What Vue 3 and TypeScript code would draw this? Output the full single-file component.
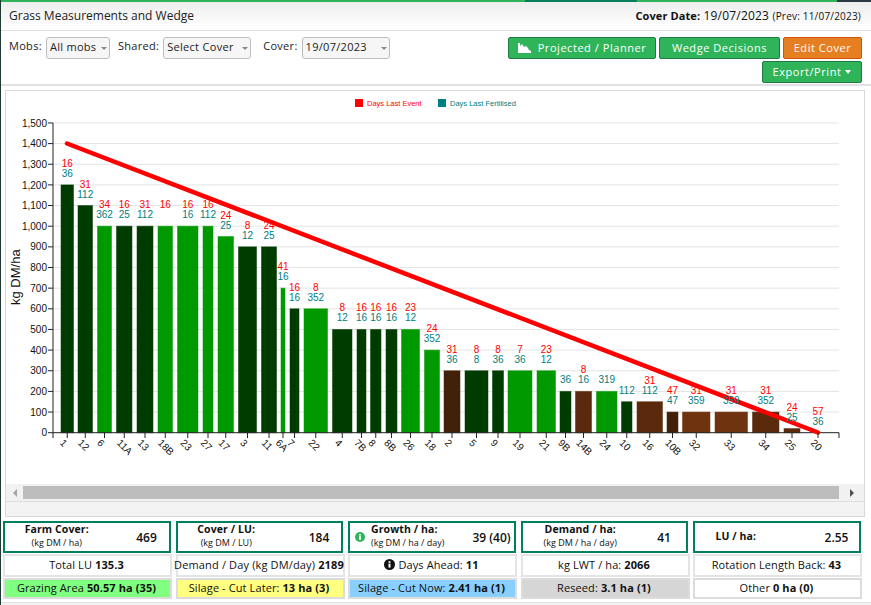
<script setup lang="ts">
interface Bar { n: string; x0: number; x1: number; v: number; c: string; r?: string; t?: string }
const DK = '#003b00', GR = '#009900', BD = '#42210b', BM = '#5b2a0c', BL = '#70330f'
const bars: Bar[] = [
  { n: '1', x0: 60.5, x1: 74, v: 1200, c: DK, r: '16', t: '36' },
  { n: '12', x0: 77.5, x1: 93, v: 1100, c: DK, r: '31', t: '112' },
  { n: '6', x0: 97, x1: 112, v: 1000, c: GR, r: '34', t: '362' },
  { n: '11A', x0: 116, x1: 132.5, v: 1000, c: DK, r: '16', t: '25' },
  { n: '13', x0: 136.5, x1: 153.5, v: 1000, c: DK, r: '31', t: '112' },
  { n: '18B', x0: 157.5, x1: 173, v: 1000, c: GR, r: '16' },
  { n: '23', x0: 177, x1: 198.5, v: 1000, c: GR, r: '16', t: '16' },
  { n: '27', x0: 202.5, x1: 213.5, v: 1000, c: GR, r: '16', t: '112' },
  { n: '17', x0: 217.5, x1: 234, v: 950, c: GR, r: '24', t: '25' },
  { n: '3', x0: 238, x1: 257, v: 900, c: DK, r: '8', t: '12' },
  { n: '11', x0: 261, x1: 277, v: 900, c: DK, r: '24', t: '25' },
  { n: '6A', x0: 280.5, x1: 285.5, v: 700, c: GR, r: '41', t: '16' },
  { n: '7', x0: 289.5, x1: 299.5, v: 600, c: DK, r: '16', t: '16' },
  { n: '22', x0: 303.5, x1: 328, v: 600, c: GR, r: '8', t: '352' },
  { n: '4', x0: 332, x1: 352.5, v: 500, c: DK, r: '8', t: '12' },
  { n: '7B', x0: 356.5, x1: 366.5, v: 500, c: DK, r: '16', t: '16' },
  { n: '8', x0: 370, x1: 381.5, v: 500, c: DK, r: '16', t: '16' },
  { n: '8B', x0: 385.5, x1: 397.5, v: 500, c: DK, r: '16', t: '16' },
  { n: '26', x0: 401, x1: 420, v: 500, c: GR, r: '23', t: '12' },
  { n: '18', x0: 424, x1: 440, v: 400, c: GR, r: '24', t: '352' },
  { n: '2', x0: 443.5, x1: 460.5, v: 300, c: BD, r: '31', t: '36' },
  { n: '5', x0: 464.5, x1: 488.5, v: 300, c: DK, r: '8', t: '8' },
  { n: '9', x0: 492, x1: 504, v: 300, c: DK, r: '8', t: '36' },
  { n: '19', x0: 507.5, x1: 532.5, v: 300, c: GR, r: '7', t: '36' },
  { n: '21', x0: 536.5, x1: 556, v: 300, c: GR, r: '23', t: '12' },
  { n: '9B', x0: 559.5, x1: 571.5, v: 200, c: DK, t: '36' },
  { n: '14B', x0: 575, x1: 592, v: 200, c: BM, r: '8', t: '16' },
  { n: '24', x0: 596, x1: 617.5, v: 200, c: GR, t: '319' },
  { n: '10', x0: 621, x1: 632.5, v: 150, c: DK, t: '112' },
  { n: '16', x0: 636.5, x1: 663, v: 150, c: BM, r: '31', t: '112' },
  { n: '10B', x0: 666.5, x1: 678.5, v: 100, c: BD, r: '47', t: '47' },
  { n: '32', x0: 682, x1: 710.5, v: 100, c: BL, r: '31', t: '359' },
  { n: '33', x0: 714.5, x1: 748, v: 100, c: BL, r: '31', t: '359' },
  { n: '34', x0: 752, x1: 779.5, v: 100, c: BM, r: '31', t: '352' },
  { n: '25', x0: 783.5, x1: 800.5, v: 20, c: BM, r: '24', t: '25' },
  { n: '20', x0: 818, x1: 818, v: 0, c: BM, r: '57', t: '36' },
]
const y0 = 432.7
const scale = 0.2065
const yOf = (v: number): number => y0 - v * scale
const cx = (b: Bar): number => (b.x0 + b.x1) / 2
const yTicks: number[] = Array.from({ length: 16 }, (_, i) => i * 100)
const fmt = (v: number): string => v.toLocaleString('en-US')

interface Stat { cls: string; title: string; sub?: string; value: string; info?: boolean }
const stats: Stat[] = [
  { cls: 'farm', title: 'Farm Cover:', sub: '(kg DM / ha)', value: '469' },
  { cls: 'lu', title: 'Cover / LU:', sub: '(kg DM / LU)', value: '184' },
  { cls: 'growth', title: 'Growth / ha:', sub: '(kg DM / ha / day)', value: '39 (40)', info: true },
  { cls: 'demand', title: 'Demand / ha:', sub: '(kg DM / ha / day)', value: '41' },
  { cls: 'luha', title: 'LU / ha:', value: '2.55' },
]
interface Cell { label: string; value: string; cls?: string; icon?: boolean }
const mids: Cell[] = [
  { label: 'Total LU', value: '135.3' },
  { label: 'Demand / Day (kg DM/day)', value: '2189', cls: 'tight' },
  { label: 'Days Ahead:', value: '11', icon: true },
  { label: 'kg LWT / ha:', value: '2066' },
  { label: 'Rotation Length Back:', value: '43' },
]
const areas: Cell[] = [
  { label: 'Grazing Area', value: '50.57 ha (35)', cls: 'green' },
  { label: 'Silage - Cut Later:', value: '13 ha (3)', cls: 'yellow' },
  { label: 'Silage - Cut Now:', value: '2.41 ha (1)', cls: 'blue' },
  { label: 'Reseed:', value: '3.1 ha (1)', cls: 'grey' },
  { label: 'Other', value: '0 ha (0)' },
]
</script>

<template>
  <div class="page">
    <div class="topline">
      <span class="seg s1"></span><span class="seg s2"></span><span class="seg s3"></span><span class="seg s4"></span>
    </div>
    <header class="head">
      <h1 class="title">Grass Measurements and Wedge</h1>
      <div class="cover-date"><b>Cover Date:</b> 19/07/2023 <small>(Prev: 11/07/2023)</small></div>
    </header>
    <section class="tools">
      <div class="filters">
        <label class="f-label">Mobs:</label>
        <div class="select s-mobs">All mobs<i class="caret"></i></div>
        <label class="f-label">Shared:</label>
        <div class="select s-shared">Select Cover<i class="caret"></i></div>
        <label class="f-label l-cover">Cover:</label>
        <div class="select s-cover">19/07/2023<i class="caret"></i></div>
      </div>
      <div class="actions">
        <button class="btn b-proj">
          <svg class="area" viewBox="0 0 13 10"><path d="M0 0 L2 0 L2 3 L4 1 L6 4 L8 3 L10 5 L11 7 L13 8 L13 10 L0 10 Z" fill="#fff"/></svg>
          Projected / Planner
        </button>
        <button class="btn b-wedge">Wedge Decisions</button>
        <button class="btn orange b-edit">Edit Cover</button>
        <button class="btn b-export">Export/Print <i class="down"></i></button>
      </div>
    </section>

    <section class="panel">
      <svg class="chart" viewBox="6 91 858 393" width="858" height="393">
        <rect x="355" y="99" width="8" height="8" fill="#f00"/>
        <text x="367" y="106" class="leg" fill="#f00">Days Last Event</text>
        <rect x="438" y="99" width="8" height="8" fill="#008080"/>
        <text x="450" y="106" class="leg" fill="#008080">Days Last Fertilised</text>

        <g v-for="t in yTicks" :key="t">
          <line v-if="t > 0" x1="53" x2="839" :y1="yOf(t)" :y2="yOf(t)" stroke="#e4e4e4" stroke-width="1"/>
          <line x1="48" x2="53" :y1="yOf(t)" :y2="yOf(t)" stroke="#222" stroke-width="1"/>
          <text x="47" :y="yOf(t) + 3.6" text-anchor="end" class="tick">{{ fmt(t) }}</text>
        </g>
        <text transform="translate(19.5 305) rotate(-90)" class="ytitle">kg DM/ha</text>

        <rect v-for="b in bars.filter(i => i.v > 0)" :key="'b' + b.n"
          :x="b.x0 + 0.5" :y="yOf(b.v)" :width="b.x1 - b.x0 - 1" :height="y0 - yOf(b.v)"
          :fill="b.c" :stroke="b.c" stroke-opacity="0.5" stroke-width="1"/>

        <line x1="53" x2="53" y1="123" y2="438" stroke="#222" stroke-width="1"/>
        <line x1="53" x2="839" :y1="y0" :y2="y0" stroke="#222" stroke-width="1"/>
        <line x1="839" x2="839" :y1="y0" y2="438" stroke="#222" stroke-width="1"/>
        <line x1="67" y1="143.5" x2="818" y2="432.5" stroke="#f00" stroke-width="4.5" stroke-linecap="round"/>

        <g v-for="b in bars" :key="'l' + b.n">
          <line :x1="cx(b)" :x2="cx(b)" :y1="y0" y2="438" stroke="#222" stroke-width="1"/>
          <text v-if="b.r" :x="cx(b)" :y="yOf(b.v) - 18" text-anchor="middle" class="val" fill="#f00">{{ b.r }}</text>
          <text v-if="b.t" :x="cx(b)" :y="yOf(b.v) - 8" text-anchor="middle" class="val" fill="#008080">{{ b.t }}</text>
          <text :transform="`translate(${cx(b) - 8} 443.5) rotate(45)`" class="xlab">{{ b.n }}</text>
        </g>
      </svg>
      <div class="scroll">
        <button class="sbtn"><i class="tri left"></i></button>
        <div class="thumb"></div>
        <button class="sbtn wide"><i class="tri right"></i></button>
      </div>
      <div class="panel-foot"></div>
    </section>

    <section class="stats">
      <div v-for="s in stats" :key="s.title" class="stat" :class="s.cls">
        <svg v-if="s.info" class="info" viewBox="0 0 10 10">
          <circle cx="5" cy="5" r="5" fill="#2fb45a"/>
          <rect x="4" y="4.2" width="2" height="3.6" fill="#fff"/>
          <rect x="4" y="2" width="2" height="1.5" fill="#fff"/>
        </svg>
        <div class="stat-label">
          <div class="stat-title">{{ s.title }}</div>
          <div v-if="s.sub" class="stat-sub">{{ s.sub }}</div>
        </div>
        <div class="stat-val">{{ s.value }}</div>
      </div>
      <div v-for="m in mids" :key="m.label" class="cell" :class="m.cls">
        <svg v-if="m.icon" class="days" viewBox="0 0 11 11">
          <circle cx="5.5" cy="5.5" r="5.5" fill="#111"/>
          <rect x="4.5" y="4.6" width="2" height="4" fill="#fff"/>
          <rect x="4.5" y="2.2" width="2" height="1.6" fill="#fff"/>
        </svg>
        <span>{{ m.label }}&nbsp;<b>{{ m.value }}</b></span>
      </div>
      <div v-for="a in areas" :key="a.label" class="cell area-cell" :class="a.cls">
        <span>{{ a.label }}&nbsp;<b>{{ a.value }}</b></span>
      </div>
    </section>
    <div class="page-foot"></div>
  </div>
</template>

<style>
html, body { margin: 0; padding: 0; background: #fff; }
</style>

<style scoped>
.page {
  width: 871px; height: 605px; overflow: hidden; box-sizing: border-box;
  border-left: 1px solid #1f3a34; background: #fff; color: #222;
  font-family: "Open Sans", "Liberation Sans", sans-serif; font-size: 11px;
  display: flex; flex-direction: column;
}
.topline { display: flex; height: 2px; flex: none; margin-left: -1px; }
.seg { display: block; height: 100%; }
.s1 { width: 525px; background: #2fb45a; }
.s2 { width: 112px; background: #067d5c; }
.s3 { width: 200px; background: #2fb45a; }
.s4 { width: 34px; background: #2b3a42; }
.head {
  flex: none; height: 29px; box-sizing: border-box; padding: 0 10px 2px 8px;
  display: flex; justify-content: space-between; align-items: center;
  background: linear-gradient(#eeeeee, #ffffff); border-bottom: 1px solid #dfdfdf;
}
.title { margin: 0; font-size: 12px; font-weight: 400; color: #222; }
.cover-date { color: #111; font-size: 12px; letter-spacing: 0.2px; }
.cover-date b { font-size: 11px; letter-spacing: 0.1px; }
.cover-date small { font-size: 10px; letter-spacing: 0.2px; }
.tools {
  flex: none; height: 55px; box-sizing: border-box; padding: 6px 9px 0 8px;
  display: flex; justify-content: space-between; border-bottom: 2px solid #e2e2e2;
}
.filters { display: flex; align-items: flex-start; letter-spacing: 0.3px; }
.f-label { line-height: 18px; margin-right: 4px; font-size: 11px; color: #222; }
.l-cover { margin-left: 4px; }
.select {
  position: relative; box-sizing: border-box; height: 22px; line-height: 17px;
  border: 1px solid #bdbdbd; border-radius: 3px; background: #f6f6f6;
  padding-left: 3px; margin-right: 8px; font-size: 11px; color: #222;
}
.s-mobs { width: 64px; }
.s-shared { width: 88px; }
.s-cover { width: 88px; margin-right: 0; }
.caret {
  position: absolute; right: 2px; top: 9px; width: 0; height: 0;
  border-left: 3px solid transparent; border-right: 3px solid transparent; border-top: 3px solid #888;
}
.actions {
  width: 360px; display: flex; flex-wrap: wrap; justify-content: flex-end; align-content: flex-start;
  gap: 2px 3px;
}
.btn {
  box-sizing: border-box; height: 22px; padding: 0; border: 1px solid #1e7a44; border-radius: 2px;
  background: #2fb45a; color: #fff; font: inherit; font-size: 11px; line-height: 18px; letter-spacing: 0.55px;
  display: flex; align-items: center; justify-content: center;
}
.b-proj { width: 148px; }
.b-wedge { width: 121px; }
.b-edit { width: 79px; }
.b-export { width: 100px; }
.orange { background: #e67e22; border-color: #d35400; }
.area { width: 13px; height: 10px; margin-right: 7px; }
.down {
  display: inline-block; margin-left: 4px; width: 0; height: 0;
  border-left: 3.5px solid transparent; border-right: 3.5px solid transparent; border-top: 4px solid #fff;
}
.panel {
  flex: none; box-sizing: border-box; width: 860px; height: 427px; margin: 4px 0 0 4px;
  border: 1px solid #d9d9d9; display: flex; flex-direction: column;
}
.chart { display: block; flex: none; }
.leg { font-family: "Liberation Sans", Arial, sans-serif; font-size: 7.5px; }
.tick { font-family: "Liberation Sans", Arial, sans-serif; font-size: 10px; fill: #111; }
.val { font-family: "Liberation Sans", Arial, sans-serif; font-size: 10px; }
.xlab { font-family: "Liberation Sans", Arial, sans-serif; font-size: 10px; fill: #111; }
.ytitle { font-family: "Liberation Sans", Arial, sans-serif; font-size: 13px; fill: #111; }
.scroll { flex: none; height: 17px; background: #f1f1f1; display: flex; align-items: center; border-bottom: 1px solid #ddd; }
.sbtn { flex: none; width: 17px; height: 17px; padding: 0; border: 0; background: none; display: flex; align-items: center; justify-content: center; }
.sbtn.wide { width: 25px; }
.thumb { flex: 1; height: 13px; background: #bdbdbd; }
.tri { width: 0; height: 0; border-top: 4px solid transparent; border-bottom: 4px solid transparent; }
.tri.left { border-right: 4px solid #a3a3a3; }
.tri.right { border-left: 4px solid #505050; }
.panel-foot { flex: 1; background: #f3f3f3; }
.stats {
  flex: none; box-sizing: border-box; margin: 4px 0 0 2px; width: 859px;
  display: grid; grid-template-columns: repeat(5, 169px); column-gap: 3.5px;
  grid-template-rows: 32px 23px 21px; row-gap: 1px;
}
.stat {
  box-sizing: border-box; margin-right: 1.5px; border: 2px solid #00805f; display: flex; align-items: center; position: relative;
  color: #111;
}
.stat-label { flex: 1; text-align: center; line-height: 13px; margin-top: -2px; }
.stat-title { font-weight: 700; font-size: 10.5px; letter-spacing: 0.1px; }
.stat-sub { font-size: 9px; }
.stat-val { flex: 0 0 44px; text-align: center; font-size: 12px; font-weight: 600; }
.farm .stat-label { padding-right: 16px; }
.lu .stat-label { padding-right: 22px; }
.demand .stat-label { padding-right: 4px; }
.luha .stat-label { padding-right: 38px; }
.growth .stat-label { text-align: left; padding-left: 6px; }
.info { width: 10px; height: 10px; margin-left: 5px; flex: none; }
.cell {
  box-sizing: border-box; border: 2px solid #e4e4e4; display: flex; align-items: center; justify-content: center;
  font-size: 11px; letter-spacing: 0.1px; color: #111; white-space: nowrap; overflow: visible;
  padding: 0 2px 2px 0;
}
.cell.tight { letter-spacing: 0.15px; }
.days { width: 11px; height: 11px; margin-right: 3px; flex: none; }
.area-cell { border-color: #dcdcdc; }
.green { background: #80ff80; }
.yellow { background: #ffff80; }
.blue { background: #88cfff; }
.grey { background: #d6d6d6; }
.page-foot { flex: 1; margin-top: 3px; background: #f3f3f3; border-top: 1px solid #e0e0e0; }
</style>
